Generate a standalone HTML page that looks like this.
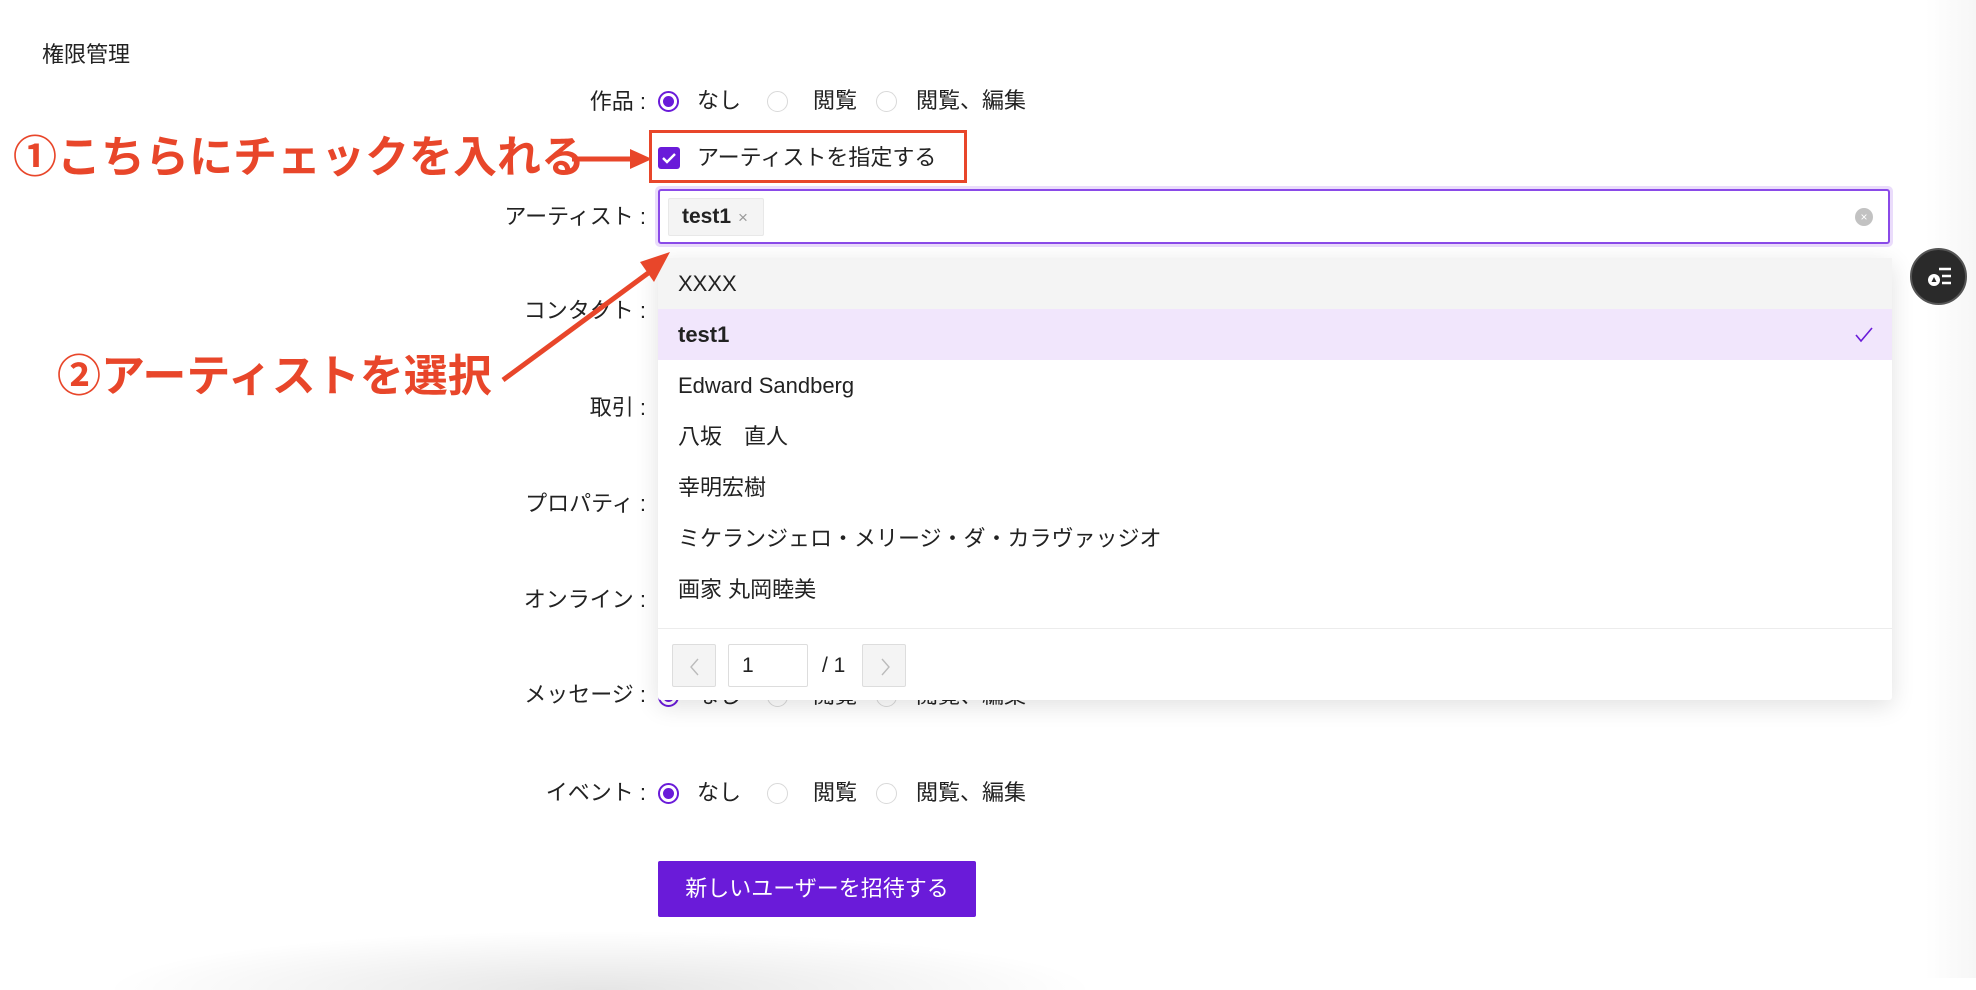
<!DOCTYPE html>
<html><head><meta charset="utf-8"><style>
*{box-sizing:border-box;margin:0;padding:0}
body{width:1976px;height:978px;position:relative;overflow:hidden;background:#fff;font-family:"Liberation Sans","Noto Sans CJK JP",sans-serif;color:#222;font-size:22px}
.a{position:absolute;white-space:nowrap;line-height:26px}
.lbl{position:absolute;right:1330px;white-space:nowrap;font-size:22px;line-height:26px}
.radio{position:absolute;width:21px;height:21px;border:1px solid #d9d9d9;border-radius:50%;background:#fff}
.radio.on{border:2px solid #6a1bd9}
.radio.on:after{content:"";position:absolute;left:3px;top:3px;width:11px;height:11px;border-radius:50%;background:#6a1bd9}
.red{color:#e8462a;font-weight:bold;font-size:44px;line-height:50px}
.item{position:absolute;left:0;width:100%;height:51px;line-height:51px;padding-left:20px;font-size:22px}
</style></head><body>
<div style="position:absolute;right:0;top:0;width:50px;height:978px;background:linear-gradient(90deg,#fff,#f6f6f6)"></div>
<div style="position:absolute;left:100px;top:930px;width:1000px;height:60px;background:radial-gradient(ellipse at 50% 100%,rgba(0,0,0,0.10),rgba(0,0,0,0) 70%)"></div>

<div class="a" style="left:42px;top:42px">権限管理</div>

<div class="lbl" style="top:89px">作品 :</div>
<div class="radio on" style="left:658px;top:91px"></div><div class="a" style="left:697px;top:88px">なし</div>
<div class="radio" style="left:767px;top:91px"></div><div class="a" style="left:813px;top:88px">閲覧</div>
<div class="radio" style="left:876px;top:91px"></div><div class="a" style="left:916px;top:88px">閲覧、編集</div>

<div style="position:absolute;left:649px;top:130px;width:318px;height:53px;border:3px solid #e8462a"></div>
<div style="position:absolute;left:658px;top:147px;width:22px;height:22px;background:#6a1bd9;border-radius:3px"><svg width="22" height="22" viewBox="0 0 22 22"><path d="M5 11l4 4 8-8" stroke="#fff" stroke-width="2.4" fill="none"/></svg></div>
<div class="a" style="left:697px;top:145px">アーティストを指定する</div>

<div class="a red" style="left:13px;top:133px;line-height:50px">①こちらにチェックを入れる</div>
<svg class="a" style="left:572px;top:145px" width="85" height="30"><path d="M0 14h62" stroke="#e8462a" stroke-width="5"/><path d="M58 4l22 10-22 10z" fill="#e8462a"/></svg>

<div class="lbl" style="top:204px">アーティスト :</div>
<div style="position:absolute;left:655px;top:186px;width:1238px;height:61px;border-radius:5px;background:#eadcfb"></div>
<div style="position:absolute;left:658px;top:189px;width:1232px;height:55px;border:2px solid #8a4ae8;border-radius:3px;background:#fff"></div>
<div style="position:absolute;left:668px;top:198px;width:96px;height:38px;background:#f4f4f4;border:1px solid #e8e8e8;border-radius:2px;font-size:21px;font-weight:bold;line-height:36px;padding-left:13px">test1<span style="font-weight:normal;color:#999;font-size:17px;margin-left:7px">×</span></div>
<div style="position:absolute;left:1855px;top:208px;width:18px;height:18px;border-radius:50%;background:#c2c2c2;color:#fff;font-size:12px;line-height:18px;text-align:center">×</div>

<div class="lbl" style="top:298px">コンタクト :</div>
<div class="lbl" style="top:395px">取引 :</div>
<div class="lbl" style="top:491px">プロパティ :</div>
<div class="lbl" style="top:587px">オンライン :</div>
<div class="lbl" style="top:682px">メッセージ :</div>
<div class="radio on" style="left:658px;top:686px"></div><div class="a" style="left:697px;top:683px">なし</div>
<div class="radio" style="left:767px;top:686px"></div><div class="a" style="left:813px;top:683px">閲覧</div>
<div class="radio" style="left:876px;top:686px"></div><div class="a" style="left:916px;top:683px">閲覧、編集</div>

<div class="lbl" style="top:780px">イベント :</div>
<div class="radio on" style="left:658px;top:783px"></div><div class="a" style="left:697px;top:780px">なし</div>
<div class="radio" style="left:767px;top:783px"></div><div class="a" style="left:813px;top:780px">閲覧</div>
<div class="radio" style="left:876px;top:783px"></div><div class="a" style="left:916px;top:780px">閲覧、編集</div>

<div style="position:absolute;left:658px;top:861px;width:318px;height:56px;background:#6a1bd9;border-radius:2px;color:#fff;font-size:22px;line-height:56px;text-align:center">新しいユーザーを招待する</div>

<div style="position:absolute;left:658px;top:258px;width:1234px;height:442px;background:#fff;box-shadow:0 6px 24px rgba(0,0,0,0.12);border-radius:3px">
 <div class="item" style="top:0;background:#f4f4f4">XXXX</div>
 <div class="item" style="top:51px;background:#f1e6fc;font-weight:bold">test1<svg style="position:absolute;right:18px;top:17px" width="20" height="18"><path d="M2 9l5 6L18 2" stroke="#6a1bd9" stroke-width="1.6" fill="none"/></svg></div>
 <div class="item" style="top:102px">Edward Sandberg</div>
 <div class="item" style="top:153px">八坂　直人</div>
 <div class="item" style="top:204px">幸明宏樹</div>
 <div class="item" style="top:255px">ミケランジェロ・メリージ・ダ・カラヴァッジオ</div>
 <div class="item" style="top:306px">画家 丸岡睦美</div>
 <div style="position:absolute;left:0;top:370px;width:100%;height:1px;background:#ececec"></div>
 <div style="position:absolute;left:14px;top:386px;width:44px;height:43px;background:#f4f4f4;border:1px solid #ddd;border-radius:2px"><svg width="44" height="43"><path d="M25 14l-7 8 7 8" stroke="#bbb" stroke-width="1.4" fill="none"/></svg></div>
 <div style="position:absolute;left:70px;top:386px;width:80px;height:43px;border:1px solid #ddd;border-radius:2px;font-size:21px;line-height:41px;padding-left:13px">1</div>
 <div class="a" style="left:164px;top:395px;font-size:21px">/ 1</div>
 <div style="position:absolute;left:204px;top:386px;width:44px;height:43px;background:#f4f4f4;border:1px solid #ddd;border-radius:2px"><svg width="44" height="43"><path d="M19 14l7 8-7 8" stroke="#bbb" stroke-width="1.4" fill="none"/></svg></div>
</div>

<div class="a red" style="left:57px;top:352px;line-height:50px">②アーティストを選択</div>
<svg class="a" style="left:495px;top:240px" width="185" height="150"><path d="M8 140L160 28" stroke="#e8462a" stroke-width="5"/><path d="M175 12l-30 10 14 20z" fill="#e8462a"/></svg>

<div style="position:absolute;left:1910px;top:248px;width:57px;height:57px;border-radius:50%;background:#2a2a2a;border:2px solid #555"><svg width="53" height="53" viewBox="0 0 53 53"><path d="M27 19h12M30 26h9M30 33h9" stroke="#fff" stroke-width="2.4"/><circle cx="22" cy="30" r="6" fill="#fff"/><path d="M19.5 32l2.5-5 2.5 5z" fill="#2a2a2a"/></svg></div>
</body></html>
